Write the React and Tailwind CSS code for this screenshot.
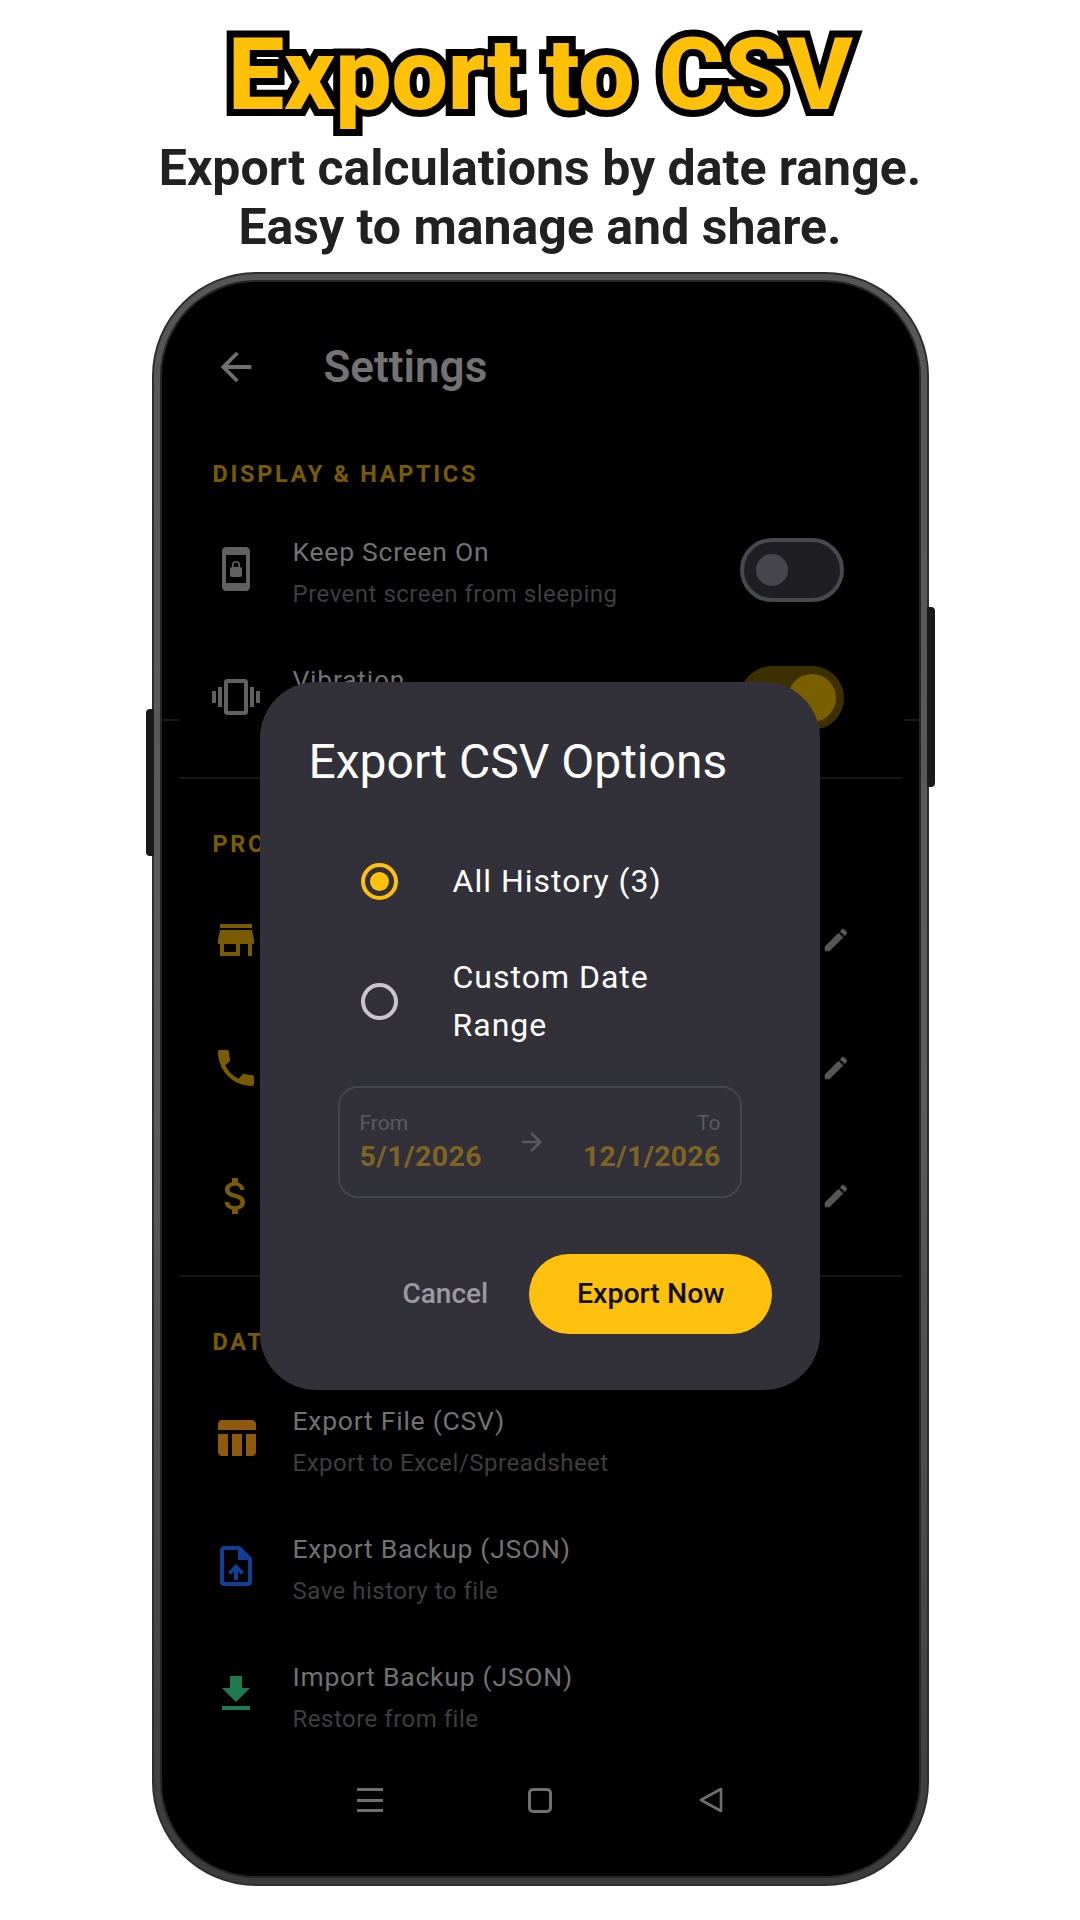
import React from "react";
import {
  MdArrowBack,
  MdScreenLockPortrait,
  MdVibration,
  MdStore,
  MdPhone,
  MdAttachMoney,
  MdEdit,
  MdTableChart,
  MdOutlineUploadFile,
  MdFileDownload,
  MdArrowForward,
} from "react-icons/md";

const Section = ({ children }) => (
  <div className="h-[28px] pl-[51px] text-[23.5px] leading-[28px] font-bold tracking-[2.7px] text-[#7a5c00]">
    {children}
  </div>
);

const Row = ({ icon: Icon, iconColor, title, sub, right }) => (
  <div className="flex h-[128px] items-center pl-[50px] pr-[75px]">
    <div className={`flex w-[48px] justify-center ${iconColor}`}>
      <Icon size={48} />
    </div>
    <div className="ml-[33px] min-w-0 flex-1 pt-[8px]">
      <div className="h-[34px] text-[26.5px] leading-[34px] tracking-[0.75px] text-[#727272]">{title}</div>
      <div className="mt-[8px] h-[34px] text-[24px] leading-[34px] tracking-[0.5px] text-[#3e3e3e]">{sub}</div>
    </div>
    {right}
  </div>
);

const Pencil = () => (
  <div className="-mr-[7px] text-[#565656]">
    <MdEdit size={30} />
  </div>
);

const Divider = ({ className }) => <div className={`mx-[17px] h-[2px] bg-[#161616] ${className}`} />;

export default function App() {
  return (
    <div className="flex h-[1920px] w-[1080px] flex-col items-center overflow-hidden bg-white font-[Roboto,sans-serif]">
      <h1 className="mt-[13px] mb-[2px] h-[124px] text-[101px] leading-[124px] font-extrabold tracking-[-0.6px] text-[#ffc107] [-webkit-text-stroke:14px_#000] [paint-order:stroke_fill]">
        Export to CSV
      </h1>
      <p className="text-center text-[50px] leading-[59px] font-bold text-[#212121]">
        Export calculations by date range.
        <br />
        Easy to manage and share.
      </p>

      {/* phone */}
      <div className="relative mt-[15px] h-[1614px] w-[777px] shrink-0 rounded-[104px] bg-[#2e2e2e] p-[2px]">
        <div className="absolute top-[335px] left-[771px] h-[180px] w-[12px] rounded-r-[4px] bg-[#1a1a1a]" />
        <div className="absolute top-[437px] left-[-6px] h-[147px] w-[12px] rounded-l-[4px] bg-[#1a1a1a]" />
        <div className="relative h-full rounded-[102px] bg-gradient-to-b from-[#565656] via-[#5c5c5c] to-[#3c3c3c] p-[6px]">
          <div className="h-full rounded-[96px] bg-[#262626] p-[2px]">
            <div className="relative flex h-full flex-col overflow-hidden rounded-[94px] bg-black">
              <div className="mt-[59px] flex h-[52px] shrink-0 items-center pl-[51px]">
                <MdArrowBack size={46} className="text-[#707070]" />
                <div className="ml-[65px] text-[44px] font-semibold text-[#737373]">Settings</div>
              </div>

              <div className="mt-[67px] mb-[17px]">
                <Section>DISPLAY &amp; HAPTICS</Section>
              </div>
              <Row
                icon={MdScreenLockPortrait}
                iconColor="text-[#616161]"
                title="Keep Screen On"
                sub="Prevent screen from sleeping"
                right={
                  <div className="flex h-[64px] w-[104px] translate-y-px items-center rounded-full border-[4px] border-[#48484f] bg-[#1f1e22] pl-[12px]">
                    <div className="h-[32px] w-[32px] rounded-full bg-[#47464c]" />
                  </div>
                }
              />
              <Row
                icon={MdVibration}
                iconColor="text-[#616161]"
                title="Vibration"
                right={
                  <div className="flex h-[64px] w-[104px] translate-y-px items-center justify-end rounded-full bg-[#3d3000] pr-[8px]">
                    <div className="h-[48px] w-[48px] rounded-full bg-[#7a5f00]" />
                  </div>
                }
              />

              <div className="absolute top-[437px] left-0 h-[2px] w-[17px] bg-[#1a1a1a]" />
              <div className="absolute top-[437px] right-0 h-[2px] w-[15px] bg-[#1a1a1a]" />

              <Divider className="mt-[16px]" />

              <div className="mt-[51px] mb-[18px]">
                <Section>PROFILE</Section>
              </div>
              <Row icon={MdStore} iconColor="text-[#7a5c00]" right={<Pencil />} />
              <Row icon={MdPhone} iconColor="text-[#7a5c00]" right={<Pencil />} />
              <Row icon={MdAttachMoney} iconColor="text-[#7a5c00]" right={<Pencil />} />

              <Divider className="mt-[15px]" />

              <div className="mt-[51px] mb-[18px]">
                <Section>DATA</Section>
              </div>
              <Row
                icon={MdTableChart}
                iconColor="text-[#8f5a0c]"
                title="Export File (CSV)"
                sub="Export to Excel/Spreadsheet"
              />
              <Row
                icon={MdOutlineUploadFile}
                iconColor="text-[#123f94]"
                title="Export Backup (JSON)"
                sub="Save history to file"
              />
              <Row
                icon={MdFileDownload}
                iconColor="text-[#1f7a4d]"
                title="Import Backup (JSON)"
                sub="Restore from file"
              />

              {/* nav bar */}
              <div className="flex h-[84px] shrink-0 items-center justify-between px-[195px]">
                <div className="flex h-[24px] w-[26px] flex-col justify-between">
                  <div className="h-[3px] bg-[#6f6f6f]" />
                  <div className="h-[3px] bg-[#6f6f6f]" />
                  <div className="h-[3px] bg-[#6f6f6f]" />
                </div>
                <div className="h-[25px] w-[24px] rounded-[5px] border-[3px] border-[#6f6f6f]" />
                <svg width="26" height="26" viewBox="0 0 26 26" fill="none">
                  <path d="M23 2 L3 13 L23 24 Z" stroke="#6f6f6f" strokeWidth="2.6" strokeLinejoin="round" />
                </svg>
              </div>

              {/* dialog */}
              <div className="absolute top-[400px] left-[98px] flex h-[708px] w-[560px] flex-col rounded-[56px] bg-[#323139] pt-[50px] pl-[49px] text-white">
                <div className="text-[48px] leading-[60px]">Export CSV Options</div>

                <div className="mt-[60px] flex h-[58px] items-center pl-[52px]">
                  <div className="flex h-[37px] w-[37px] items-center justify-center rounded-full border-[4px] border-[#ffc10e]">
                    <div className="h-[19px] w-[19px] rounded-full bg-[#ffc10e]" />
                  </div>
                  <div className="ml-[55px] text-[32px] tracking-[1px]">All History (3)</div>
                </div>

                <div className="mt-[43px] flex items-center pl-[52px]">
                  <div className="h-[37px] w-[37px] rounded-full border-[4px] border-[#cac4d0]" />
                  <div className="ml-[55px] w-[240px] text-[32px] leading-[48px] tracking-[1px]">
                    Custom Date Range
                  </div>
                </div>

                <div className="mt-[37px] ml-[29px] flex h-[112px] w-[404px] items-center justify-between rounded-[20px] border-2 border-[#45454c] pr-[19px] pl-[20px]">
                  <div>
                    <div className="text-[21px] leading-[26px] text-[#5a5a60]">From</div>
                    <div className="mt-[4px] text-[28.5px] leading-[34px] font-bold tracking-[0.4px] text-[#7f6524]">
                      5/1/2026
                    </div>
                  </div>
                  <MdArrowForward size={30} className="-translate-x-px text-[#5a5a60]" />
                  <div className="text-right">
                    <div className="text-[21px] leading-[26px] text-[#5a5a60]">To</div>
                    <div className="mt-[4px] text-[28.5px] leading-[34px] font-bold tracking-[0.2px] text-[#7f6524]">
                      12/1/2026
                    </div>
                  </div>
                </div>

                <div className="mt-[56px] flex h-[80px] items-center">
                  <div className="ml-[94px] text-[28px] font-medium text-[#9a9a9f]">Cancel</div>
                  <div className="ml-[41px] flex h-[80px] w-[243px] items-center justify-center rounded-full bg-[#ffc10e] text-[28.5px] font-medium text-[#111]">
                    Export Now
                  </div>
                </div>
              </div>
            </div>
          </div>
        </div>
      </div>
    </div>
  );
}
